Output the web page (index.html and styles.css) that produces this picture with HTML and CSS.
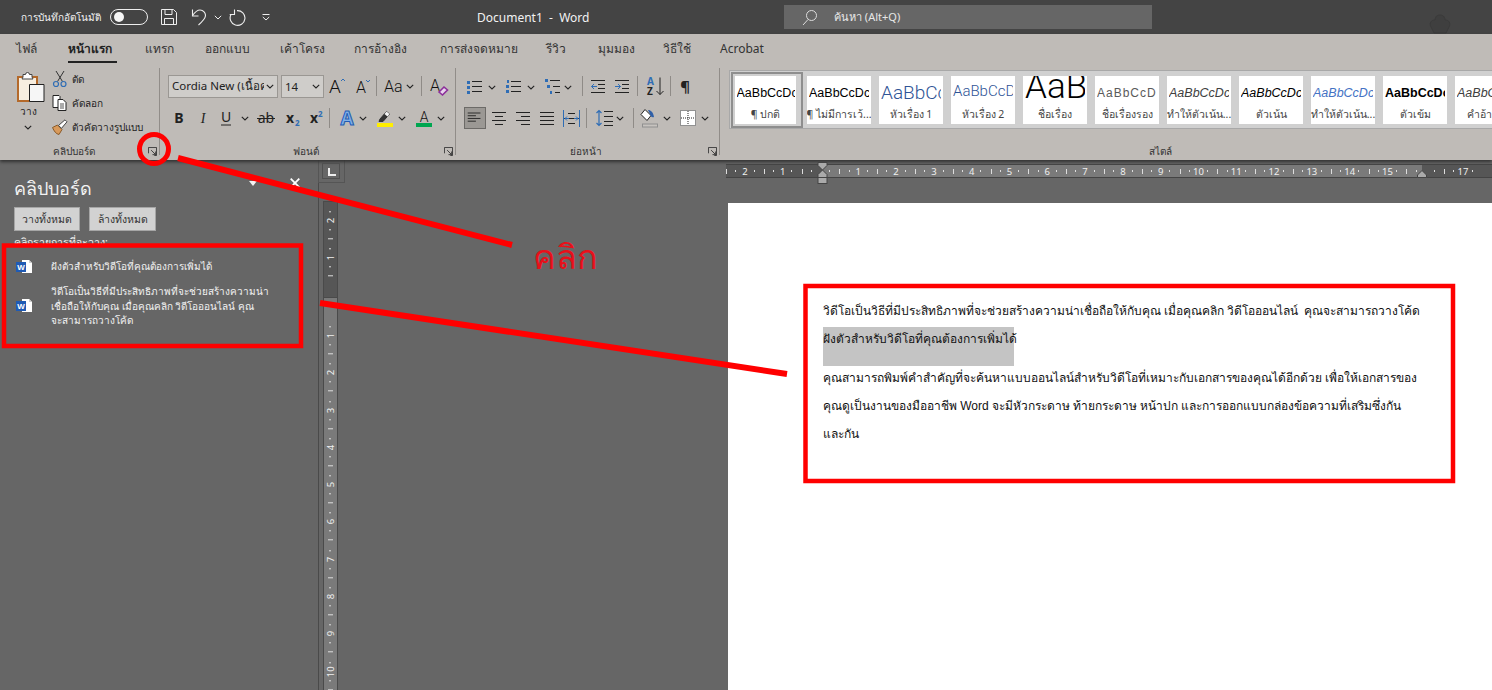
FILE: index.html
```html
<!DOCTYPE html>
<html lang="th">
<head>
    <meta charset="UTF-8">
    <meta name="viewport" content="width=device-width, initial-scale=1.0">
    <title>Document1 - Word</title>
    <link rel="stylesheet" href="styles.css">
</head>
<body>
<svg class="defs" width="0" height="0">
    <symbol id="chev" viewBox="0 0 8 5"><path d="M.8.8 4 4 7.2.8" fill="none" stroke="#222" stroke-width="1.1"/></symbol>
    <symbol id="launch" viewBox="0 0 10 10"><path d="M.5 7V.5h9V9.5H7M3.5 3.5 8.5 8.5M5 8.5h3.5V5" fill="none" stroke="#333" stroke-width="1"/></symbol>
    <symbol id="word" viewBox="0 0 16 15"><path d="M6 1h7l3 3v10H6z" fill="#fff"/><path d="M13 1v3h3" fill="#cfcfcf"/><rect y="3" width="10" height="10" fill="#1f5bb5"/><text x="5" y="11" class="word-w">W</text></symbol>
</svg>

<!-- แถบชื่อเรื่อง -->
<header class="titlebar">
    <span class="autosave">การบันทึกอัตโนมัติ</span>
    <span class="toggle"><i></i></span>
    <svg class="qat save" width="16" height="16" viewBox="0 0 16 16"><path d="M.5.5h12l3 3v12H.5zM4 .5v5h7v-5M3.5 15.5v-6h9v6" fill="none" stroke="#eee"/></svg>
    <svg class="qat undo" width="15" height="17" viewBox="0 0 15 17"><path d="M1.500.5v6.500h6M1.500 6.500C4 3 6 1 9 1c3.500 0 5.500 3 5.500 5.500 0 3-3 6-7 9.500" fill="none" stroke="#eee" stroke-width="1.100"/></svg>
    <svg class="qat chev-w" width="8" height="5"><path d="M.8.8 4 4 7.200.8" fill="none" stroke="#eee"/></svg>
    <svg class="qat redo" width="17" height="17" viewBox="0 0 17 17"><path d="M5.500.5v5H.7M8 1.600A7.400 7.400 0 1 1 2 5.500" fill="none" stroke="#eee" stroke-width="1.100"/></svg>
    <svg class="qat more" width="8" height="7" viewBox="0 0 8 7"><path d="M.5.500h7M.8 3 4 6 7.200 3" fill="none" stroke="#eee"/></svg>
    <span class="doc-title">Document1 &nbsp;-&nbsp; Word</span>
    <div class="search">
        <svg width="16" height="17" viewBox="0 0 16 17"><circle cx="9.500" cy="6.500" r="5" fill="none" stroke="#ddd"/><path d="M6 10.500 1 16" stroke="#ddd"/></svg>
        <span>ค้นหา (Alt+Q)</span>
    </div>
    <svg class="crown" width="30" height="24" viewBox="0 0 30 24"><path d="M15 2c4 0 5 3 5 5 4 0 6 3 4 7l-3 6H9l-3-6C4 10 6 7 10 7c0-2 1-5 5-5z" fill="#3f3f3f" stroke="#3a3a3a"/></svg>
</header>

<!-- ริบบอน -->
<section class="ribbon">
    <nav class="tabs">
        <span class="tab t-file">ไฟล์</span>
        <span class="tab t-home active">หน้าแรก</span>
        <span class="tab t-insert">แทรก</span>
        <span class="tab t-design">ออกแบบ</span>
        <span class="tab t-layout">เค้าโครง</span>
        <span class="tab t-ref">การอ้างอิง</span>
        <span class="tab t-mail">การส่งจดหมาย</span>
        <span class="tab t-review">รีวิว</span>
        <span class="tab t-view">มุมมอง</span>
        <span class="tab t-help">วิธีใช้</span>
        <span class="tab">Acrobat</span>
    </nav>
    <div class="groups">
        <div class="group g-clip">
            <div class="group-body clip-body">
                <div class="paste">
                    <svg class="paste-icon" width="30" height="32" viewBox="0 0 30 32"><path d="M1 5h19v24H1z" fill="#f7eee0" stroke="#b4692a" stroke-width="2"/><path d="M6 5V2.500h2.500a2 2 0 0 1 4 0H15V5l1 2H5z" fill="#fff" stroke="#444"/><path d="M12.500 12.500h14.500v17H12.500z" fill="#f6f6f6" stroke="#222"/></svg>
                    <span>วาง</span>
                    <svg width="8" height="5"><use href="#chev"/></svg>
                </div>
                <div class="clip-list">
                    <div class="clip-row">
                        <svg width="16" height="18" viewBox="0 0 16 18"><path d="M4 1l6.500 10.500M12 1 5.500 11.500" stroke="#333" fill="none"/><circle cx="4" cy="14" r="2.500" fill="none" stroke="#2f6db5" stroke-width="1.200"/><circle cx="11.500" cy="14" r="2.500" fill="none" stroke="#2f6db5" stroke-width="1.200"/></svg>
                        <span>ตัด</span>
                    </div>
                    <div class="clip-row">
                        <svg width="16" height="16" viewBox="0 0 16 16"><path d="M1 .5h6l1 1v11H1z" fill="#fff" stroke="#222"/><path d="M6 4.500h5l3 3v8H6z" fill="#fff" stroke="#222"/><path d="M8 9h4M8 11h4M8 13h4" stroke="#555"/></svg>
                        <span>คัดลอก</span>
                    </div>
                    <div class="clip-row">
                        <svg width="16" height="16" viewBox="0 0 16 16"><path d="M.5 8.500l5-2.500 4.500 4.500-3 5C4 15 2 12 .5 8.500z" fill="#d99a5b" stroke="#8a5a28"/><path d="M6.500 6.500 13 .8l2 2-5.500 6.500z" fill="#fff" stroke="#444"/></svg>
                        <span>ตัวคัดวางรูปแบบ</span>
                    </div>
                </div>
            </div>
            <div class="group-foot"><span>คลิปบอร์ด</span><svg width="9" height="9"><use href="#launch"/></svg></div>
        </div>

        <div class="group g-font">
            <div class="group-body">
                <div class="tool-row">
                    <div class="combo c-font"><span class="combo-text">Cordia New (เนื้อคว</span><svg width="8" height="5"><use href="#chev"/></svg></div>
                    <div class="combo c-size"><span class="combo-text">14</span><svg width="8" height="5"><use href="#chev"/></svg></div>
                    <svg width="26" height="22" viewBox="0 0 26 22"><text x="5" y="18" class="ic-text thin big">A</text><path d="M17 6l2-2 2 2" fill="none" stroke="#2f6db5"/></svg>
                    <svg width="24" height="22" viewBox="0 0 24 22"><text x="6" y="18" class="ic-text thin mid">A</text><path d="M16 5l2 2 2-2" fill="none" stroke="#2f6db5"/></svg>
                    <i class="sep"></i>
                    <svg width="40" height="22" viewBox="0 0 40 22"><text x="5" y="17" class="ic-text thin mid">Aa</text><use href="#chev" x="27" y="9" width="8" height="5"/></svg>
                    <i class="sep"></i>
                    <svg width="26" height="22" viewBox="0 0 26 22"><text x="6" y="16" class="ic-text thin mid">A</text><path d="M15 17l5-5 3.500 3-5 5z" fill="#e9d4ee" stroke="#8c2f9a" stroke-width="1.600"/></svg>
                </div>
                <div class="tool-row second">
                    <svg width="23" height="22" viewBox="0 0 23 22"><text x="11" y="16" class="ic-text bold center">B</text></svg>
                    <svg width="24" height="22" viewBox="0 0 24 22"><text x="12" y="16" class="ic-text ital center">I</text></svg>
                    <svg width="21" height="22" viewBox="0 0 21 22"><text x="11" y="15" class="ic-text center">U</text><path d="M6 18h10" stroke="#222"/></svg>
                    <svg width="17" height="22" viewBox="0 0 17 22"><use href="#chev" x="5" y="9" width="8" height="5"/></svg>
                    <svg width="26" height="22" viewBox="0 0 26 22"><text x="13" y="16" class="ic-text center">ab</text><path d="M4 11.500h18" stroke="#222"/></svg>
                    <svg width="25" height="22" viewBox="0 0 25 22"><text x="11" y="16" class="ic-text bold center">x</text><text x="16" y="19" class="ic-sub">2</text></svg>
                    <svg width="23" height="22" viewBox="0 0 23 22"><text x="10" y="16" class="ic-text bold center">x</text><text x="14" y="10" class="ic-sub">2</text></svg>
                    <i class="sep"></i>
                    <svg width="40" height="22" viewBox="0 0 40 22"><text x="15" y="18" class="ic-glow center">A</text><use href="#chev" x="27" y="9" width="8" height="5"/></svg>
                    <svg width="40" height="22" viewBox="0 0 40 22"><path d="M8 12l6.500-7.500 3 2.500-6.500 7.500H7z" fill="#333" stroke="#333"/><path d="M12.500 7l2-2.500 3 2.500-2 2.500z" fill="#f4f4f4"/><rect x="5" y="16" width="16" height="4" fill="#ffee00"/><use href="#chev" x="26" y="9" width="8" height="5"/></svg>
                    <svg width="39" height="22" viewBox="0 0 39 22"><text x="12" y="15" class="ic-text thin center">A</text><rect x="4" y="16" width="16" height="4" fill="#00a650"/><use href="#chev" x="25" y="9" width="8" height="5"/></svg>
                </div>
            </div>
            <div class="group-foot"><span>ฟอนต์</span><svg width="9" height="9"><use href="#launch"/></svg></div>
        </div>

        <div class="group g-para">
            <div class="group-body">
                <div class="tool-row para-row">
                    <svg width="36" height="22" viewBox="0 0 36 22"><path d="M3 6h3v3H3zM3 11h3v3H3zM3 16h3v3H3z" fill="#2f6db5"/><path d="M8 6.500h10M8 11.500h10M8 16.500h10" stroke="#222"/><use href="#chev" x="24" y="10" width="8" height="5"/></svg>
                    <svg width="38" height="22" viewBox="0 0 38 22"><path d="M7 5h2v3H7zM6 10h3v3H6zM6 15h3v3H6z" fill="#2f6db5"/><path d="M11 6.500h10M11 11.500h10M11 16.500h10" stroke="#222"/><use href="#chev" x="27" y="10" width="8" height="5"/></svg>
                    <svg width="40" height="22" viewBox="0 0 40 22"><path d="M7 4h3v3H7zM9 10h3v3H9zM12 16h2v3h-2z" fill="#2f6db5"/><path d="M12 5.500h10M15 11.500h7M17 17.500h5" stroke="#222"/><use href="#chev" x="26" y="10" width="8" height="5"/></svg>
                    <i class="sep wide"></i>
                    <svg width="27" height="22" viewBox="0 0 27 22"><path d="M8 5.500h14M15 9.500h7M15 13.500h7M8 17.500h14" stroke="#222"/><path d="M14 11.500H8.500M11 9l-2.500 2.500L11 14" fill="none" stroke="#2f6db5"/></svg>
                    <svg width="25" height="22" viewBox="0 0 25 22"><path d="M5 5.500h14M12 9.500h7M12 13.500h7M5 17.500h14" stroke="#222"/><path d="M5 11.500h5.500M8 9l2.500 2.500L8 14" fill="none" stroke="#2f6db5"/></svg>
                    <i class="sep"></i>
                    <svg width="30" height="22" viewBox="0 0 30 22"><text x="7" y="10" class="ic-sort blue">A</text><text x="7" y="20" class="ic-sort">Z</text><path d="M20 2.500v17M16.500 16l3.500 3.500 3.500-3.500" fill="none" stroke="#222"/></svg>
                    <i class="sep tight"></i>
                    <svg width="30" height="22" viewBox="0 0 30 22"><text x="14" y="17" class="ic-text bold center big-p">¶</text></svg>
                </div>
                <div class="tool-row second para-row">
                    <svg class="pressed" width="22" height="22" viewBox="0 0 22 22"><path d="M3 5.500h14M3 8.500h9M3 11.500h14M3 14.500h9" stroke="#222"/></svg>
                    <svg width="25" height="22" viewBox="0 0 25 22"><path d="M6 5.500h14M9 9.500h8M6 13.500h14M9 17.500h8" stroke="#222"/></svg>
                    <svg width="24" height="22" viewBox="0 0 24 22"><path d="M5 5.500h14M10 9.500h9M5 13.500h14M10 17.500h9" stroke="#222"/></svg>
                    <svg width="24" height="22" viewBox="0 0 24 22"><path d="M5 5.500h14M5 9.500h14M5 13.500h14M5 17.500h14" stroke="#222"/></svg>
                    <svg width="25" height="22" viewBox="0 0 25 22"><path d="M4.500 3v17M20.500 3v17" stroke="#2f6db5"/><path d="M9 6.500h7M5 11.500h15M9 16.500h7" stroke="#222"/><path d="M10 11.500H6M8 9.500l-2 2 2 2M15 11.500h4M17 9.500l2 2-2 2" fill="none" stroke="#2f6db5"/></svg>
                    <i class="sep"></i>
                    <svg width="41" height="22" viewBox="0 0 41 22"><path d="M10 3.500v15M7.500 6 10 3.500 12.500 6M7.500 16l2.500 2.500 2.500-2.500" fill="none" stroke="#2f6db5" stroke-width="1.200"/><path d="M15 4.500h9M15 9.500h9M15 14.500h9M15 18.500h9" stroke="#222"/><use href="#chev" x="27" y="9" width="8" height="5"/></svg>
                    <i class="sep mid"></i>
                    <svg width="42" height="22" viewBox="0 0 42 22"><path d="M11 2.500l6 6-4 5-6-6z" fill="#fff" stroke="#222"/><path d="M14 3c3 0 5 2 6 7-2 1-4-1-4-3z" fill="#2f5fa8"/><rect x="8.500" y="17" width="15" height="3" fill="#c7c3bf" stroke="#8f8f8f"/><use href="#chev" x="29" y="9" width="8" height="5"/></svg>
                    <svg width="36" height="22" viewBox="0 0 36 22"><rect x="4" y="3" width="16" height="16" fill="#fff"/><path d="M4.500 3.500h15v15h-15z" fill="none" stroke="#222" stroke-dasharray="1 1"/><path d="M12 4v14M5 11h14" stroke="#222" stroke-dasharray="1 1"/><use href="#chev" x="25" y="9" width="8" height="5"/></svg>
                </div>
            </div>
            <div class="group-foot"><span>ย่อหน้า</span><svg width="9" height="9"><use href="#launch"/></svg></div>
        </div>

        <div class="group g-styles">
            <div class="group-body gallery-wrap">
                <div class="gallery">
                    <div class="style-card selected"><span class="sample">AaBbCcDc</span><span class="label">¶ ปกติ</span></div>
                    <div class="style-card"><span class="sample">AaBbCcDc</span><span class="label">¶ ไม่มีการเว้...</span></div>
                    <div class="style-card"><span class="sample s-h1">AaBbCc</span><span class="label">หัวเรื่อง 1</span></div>
                    <div class="style-card"><span class="sample s-h2">AaBbCcD</span><span class="label">หัวเรื่อง 2</span></div>
                    <div class="style-card"><span class="sample s-title">AaB</span><span class="label">ชื่อเรื่อง</span></div>
                    <div class="style-card"><span class="sample s-sub">AaBbCcD</span><span class="label">ชื่อเรื่องรอง</span></div>
                    <div class="style-card"><span class="sample s-em">AaBbCcDc</span><span class="label">ทำให้ตัวเน้น...</span></div>
                    <div class="style-card"><span class="sample s-emb">AaBbCcDc</span><span class="label">ตัวเน้น</span></div>
                    <div class="style-card"><span class="sample s-emblue">AaBbCcDc</span><span class="label">ทำให้ตัวเน้น...</span></div>
                    <div class="style-card"><span class="sample s-bold">AaBbCcDc</span><span class="label">ตัวเข้ม</span></div>
                    <div class="style-card"><span class="sample s-em">AaBbCcDc</span><span class="label">คำอ้างอิง</span></div>
                </div>
            </div>
            <div class="group-foot"><span>สไตล์</span></div>
        </div>
    </div>
</section>

<!-- พื้นที่ทำงาน -->
<main class="workspace">
    <aside class="pane">
        <div class="pane-head">
            <h2>คลิปบอร์ด</h2>
            <i class="pane-menu"></i>
            <svg class="pane-close" width="10" height="10" viewBox="0 0 10 10"><path d="M.7.7l8.600 8.600M9.300.7.700 9.300" stroke="#fff" stroke-width="1.800"/></svg>
        </div>
        <div class="pane-btns"><button class="btn">วางทั้งหมด</button><button class="btn">ล้างทั้งหมด</button></div>
        <p class="pane-hint">คลิกรายการที่จะวาง:</p>
        <div class="clip-item one">
            <svg width="16" height="15"><use href="#word"/></svg>
            <p>ฝังตัวสำหรับวิดีโอที่คุณต้องการเพิ่มได้</p>
        </div>
        <div class="clip-item">
            <svg width="16" height="15"><use href="#word"/></svg>
            <p>วิดีโอเป็นวิธีที่มีประสิทธิภาพที่จะช่วยสร้างความน่า<br>เชื่อถือให้กับคุณ เมื่อคุณคลิก วิดีโอออนไลน์ คุณ<br>จะสามารถวางโค้ด</p>
        </div>
    </aside>

    <div class="vruler-col">
        <div class="tab-stop"><i></i></div>
        <div class="vruler">
            <div class="vr-top"><span class="n">2</span><span class="n">1</span></div>
            <div class="vr-main"><span class="n">1</span><span class="n">2</span><span class="n">3</span><span class="n">4</span><span class="n">5</span><span class="n">6</span><span class="n">7</span><span class="n">8</span><span class="n">9</span><span class="n">10</span></div>
        </div>
    </div>

    <div class="canvas">
        <div class="hruler">
            <span class="n">2</span><span class="n">1</span><span class="n"></span><span class="n">1</span><span class="n">2</span><span class="n">3</span><span class="n">4</span><span class="n">5</span><span class="n">6</span><span class="n">7</span><span class="n">8</span><span class="n">9</span><span class="n">10</span><span class="n">11</span><span class="n">12</span><span class="n">13</span><span class="n">14</span><span class="n">15</span><span class="n"></span><span class="n">17</span>
            <svg class="indent-left" width="11" height="22" viewBox="0 0 11 22"><path d="M1 .5h9v3L5.500 8 10 12.500v3H1v-3L5.500 8 1 3.500z" fill="#aaa" stroke="#444"/><rect x="1" y="15.500" width="9" height="6" fill="#aaa" stroke="#444"/></svg>
            <svg class="indent-right" width="10" height="8" viewBox="0 0 10 8"><path d="M5 .5 9.500 5v2.500H.5V5z" fill="#aaa" stroke="#444"/></svg>
        </div>
        <article class="page">
            <p class="line">วิดีโอเป็นวิธีที่มีประสิทธิภาพที่จะช่วยสร้างความน่าเชื่อถือให้กับคุณ เมื่อคุณคลิก วิดีโอออนไลน์ &nbsp;คุณจะสามารถวางโค้ด</p>
            <p class="line picked">ฝังตัวสำหรับวิดีโอที่คุณต้องการเพิ่มได้</p>
            <p class="line">คุณสามารถพิมพ์คำสำคัญที่จะค้นหาแบบออนไลน์สำหรับวิดีโอที่เหมาะกับเอกสารของคุณได้อีกด้วย เพื่อให้เอกสารของ</p>
            <p class="line">คุณดูเป็นงานของมืออาชีพ <span class="latin">Word</span> จะมีหัวกระดาษ ท้ายกระดาษ หน้าปก และการออกแบบกล่องข้อความที่เสริมซึ่งกัน</p>
            <p class="line">และกัน</p>
        </article>
    </div>
</main>

<!-- เส้นกำกับสีแดง -->
<svg class="marks" width="1492" height="690" viewBox="0 0 1492 690">
    <g fill="none" stroke="#f00">
        <circle cx="154" cy="149" r="14.500" stroke-width="5"/>
        <path d="M178 158 512 245" stroke-width="6"/>
        <path d="M320 303 787 374" stroke-width="6"/>
        <rect x="4" y="245.500" width="297" height="100.500" stroke-width="4.500"/>
        <rect x="805.500" y="286" width="647.500" height="195" stroke-width="4.500"/>
    </g>
</svg>
<span class="click-note">คลิก</span>
</body>
</html>
```

FILE: styles.css
```css
*{padding:0;margin:0;box-sizing:border-box;}
html,body{width:1492px;height:690px;overflow:hidden;}
body{font-family:"Noto Sans","Liberation Sans",sans-serif;font-size:12px;color:#222;background:#666;position:relative;}
svg{display:block;flex:none;}
.defs{position:absolute;}
.word-w{font:bold 8px "Liberation Sans",sans-serif;fill:#fff;text-anchor:middle;}

/* แถบชื่อเรื่อง */
.titlebar{height:34px;background:#444;color:#f2f2f2;display:flex;align-items:center;padding-left:21px;overflow:hidden;}
.autosave{width:89px;white-space:nowrap;font-size:10px;}
.toggle{width:38px;height:16px;border:1px solid #eee;border-radius:8px;display:flex;align-items:center;padding-left:3px;}
.toggle i{width:10px;height:10px;border-radius:50%;background:#f5f5f5;}
.qat{margin-left:13px;}
.undo{margin-left:14px;}
.chev-w{margin-left:8px;}
.redo{margin-left:7px;}
.more{margin-left:16px;}
.doc-title{margin-left:207px;width:307px;font-size:12px;white-space:nowrap;}
.search{width:368px;height:24px;background:#666;display:flex;align-items:center;gap:16px;padding-left:18px;font-size:11px;color:#e6e6e6;}
.crown{margin-left:273px;margin-top:16px;}

/* ริบบอน */
.ribbon{height:126px;background:#bfbbb7;overflow:hidden;box-shadow:0 2px 3px #333;position:relative;}
.tabs{height:34px;display:flex;padding-left:16px;font-size:12px;color:#333;}
.tab{height:28px;margin-top:1px;line-height:28px;white-space:nowrap;border-bottom:2px solid transparent;flex:none;}
.tab.active{font-weight:700;color:#222;border-bottom-color:#222;}
.t-file{width:52px;}
.t-home{width:49px;margin-right:28px;}
.t-insert{width:60px;}
.t-design{width:75px;}
.t-layout{width:74px;}
.t-ref{width:86px;}
.t-mail{width:106px;}
.t-review{width:52px;}
.t-view{width:65px;}
.t-help{width:57px;}
.groups{display:flex;height:92px;width:1600px;}
.group{display:flex;flex-direction:column;flex:none;background:linear-gradient(#918d89,#918d89) right top/1px 87px no-repeat;}
.group-body{height:76px;}
.group-foot{height:15px;display:flex;align-items:center;font-size:10px;color:#333;padding-right:3px;}
.group-foot span{flex:1;text-align:center;}
.g-clip{width:160px;}
.g-font{width:296px;padding-left:8px;}
.g-para{width:264px;padding-left:8px;}
.g-styles{width:884px;background:none;}
.clip-body{display:flex;}
.paste{width:56px;padding-top:4px;display:flex;flex-direction:column;align-items:center;font-size:10px;}
.paste-icon{margin-left:7px;}
.paste span{line-height:14px;margin:0 0 7px;}
.clip-list{margin:-1px 0 0 -4px;}
.clip-row{height:24px;display:flex;align-items:center;gap:4px;font-size:10px;white-space:nowrap;}
.tool-row{display:flex;align-items:center;height:24px;margin-top:6px;}
.tool-row.second{margin-top:8px;}
.combo{height:23px;background:#cfcdca;border:1px solid #9a9793;display:flex;align-items:center;justify-content:space-between;padding:0 3px;margin-right:3px;overflow:hidden;}
.combo-text{font-size:11.500px;white-space:nowrap;overflow:hidden;}
.c-font{width:110px;}
.c-font .combo-text{width:92px;}
.c-size{width:43px;margin-right:0;}
.sep{width:1px;height:20px;background:#8f8b87;margin:0 2px;flex:none;}
.sep.wide{margin:0 0 0 4px;}
.sep.tight{margin:0;}
.sep.mid{margin:0 0 0 3px;}
.pressed{background:#9b9894;border:1px solid #6c6a67;}
.ic-text{font-family:"Noto Sans",sans-serif;font-size:14px;fill:#222;}
.ic-text.thin{font-family:Roboto,sans-serif;font-weight:300;fill:#111;}
.ic-text.big{font-size:19px;}
.ic-text.mid{font-size:16px;}
.ic-text.big-p{font-size:15px;}
.bold{font-weight:700;}
.ital{font-style:italic;font-family:"Liberation Serif",serif;}
.center{text-anchor:middle;}
.ic-sub{font:bold 8px "Noto Sans",sans-serif;fill:#2f6db5;}
.ic-glow{font:bold 19px "Noto Sans",sans-serif;fill:#7fb0e8;stroke:#1f5bb5;text-anchor:middle;}
.ic-sort{font:bold 10px "Noto Sans",sans-serif;fill:#222;}
.ic-sort.blue{fill:#2f6db5;}

/* แกลเลอรีสไตล์ */
.gallery-wrap{padding:2px 0 0 9px;}
.gallery{height:59px;background:#d0d0d0;border:1px solid #a8a8a8;display:flex;align-items:center;gap:8px;padding-left:5px;}
.style-card{width:64px;height:48px;background:#fff;flex:none;display:flex;flex-direction:column;align-items:center;overflow:hidden;}
.style-card.selected{border-right:3px solid #d0d0d0;box-shadow:0 0 0 2px #d0d0d0,0 0 0 4px #8e8e8e;overflow:visible;}
.sample{height:29px;width:60px;overflow:hidden;white-space:nowrap;font:12.500px/34px "Liberation Sans",sans-serif;color:#000;flex:none;}
.label{font-size:10.500px;line-height:19px;color:#444;white-space:nowrap;}
.selected .sample{width:58px;}
.s-h1{font-family:Roboto,sans-serif;font-weight:300;font-size:19px;line-height:33px;color:#2f5496;}
.s-h2{font-family:Roboto,sans-serif;font-weight:300;font-size:15px;line-height:31px;color:#2f5496;}
.s-title{font-family:Roboto,sans-serif;font-weight:300;font-size:35px;line-height:22px;}
.s-sub{font-size:12px;letter-spacing:1px;color:#5a5a5a;}
.s-em{font-style:italic;color:#404040;}
.s-emb{font-style:italic;color:#000;}
.s-emblue{font-style:italic;color:#4472c4;}
.s-bold{font-weight:700;}

/* พื้นที่ทำงาน */
.workspace{display:flex;height:530px;background:#666;}
.pane{width:318px;color:#f2f2f2;padding:0 14px;flex:none;overflow:hidden;}
.pane-head{height:47px;display:flex;align-items:flex-start;}
.pane-head h2{font-size:18px;font-weight:400;line-height:24px;margin-top:16px;width:234px;}
.pane-menu{width:0;height:0;margin:21px 0 0 1px;border:4px solid transparent;border-top:5px solid #f2f2f2;border-bottom:0;}
.pane-close{margin:18px 0 0 33px;}
.pane-btns{display:flex;gap:9px;}
.btn{height:24px;width:66px;background:#d2d2d2;border:1px solid #a6a6a6;font:10.500px "Noto Sans",sans-serif;color:#333;}
.btn + .btn{width:67px;}
.pane-hint{font-size:10.500px;line-height:14px;margin-top:4px;height:13px;overflow:hidden;}
.clip-item{display:flex;align-items:center;gap:19px;padding-left:2px;font-size:10px;line-height:14.500px;white-space:nowrap;margin-top:10px;}
.clip-item.one{margin-top:11px;}

.vruler-col{width:408px;flex:none;border-left:1px solid #4a4a4a;}
.tab-stop{width:27px;height:23px;border:1px solid #555;border-top:0;margin-left:-1px;padding:3px;background:#666;}
.tab-stop i{display:block;height:16px;width:18px;border:1px solid #505050;position:relative;}
.tab-stop i::before{content:"";position:absolute;left:5px;top:4px;width:6px;height:6px;border-left:2px solid #eee;border-bottom:2px solid #eee;}
.vruler{margin:18px 0 0 4px;width:15px;}
.vr-top{height:97px;background:#565656;border:1px solid #4a4a4a;display:flex;flex-direction:column;overflow:hidden;}
.vr-main{height:420px;padding-top:19px;background:#7a7a7a;border:1px solid #4a4a4a;border-top:0;display:flex;flex-direction:column;overflow:hidden;}
.vruler .n{height:37.300px;flex:none;display:flex;align-items:center;justify-content:center;color:#f0f0f0;font-size:9.500px;writing-mode:vertical-rl;transform:rotate(180deg);
    background-image:linear-gradient(#ddd,#ddd),linear-gradient(#ddd,#ddd),linear-gradient(#ddd,#ddd);
    background-size:5px 1px,2px 1px,2px 1px;background-repeat:no-repeat;background-position:center 0,center 25%,center 75%;}

.canvas{flex:1;overflow:hidden;}
.hruler{width:766px;height:14px;margin-top:4px;display:flex;position:relative;
    background:linear-gradient(to right,#565656 96px,#7a7a7a 96px,#7a7a7a 696px,#565656 696px);border-top:1px solid #444;border-bottom:1px solid #444;}
.hruler .n{width:37.800px;flex:none;text-align:center;line-height:13px;font-size:9.500px;color:#f0f0f0;
    background-image:linear-gradient(#ddd,#ddd),linear-gradient(#ddd,#ddd),linear-gradient(#ddd,#ddd);
    background-size:1px 5px,1px 2px,1px 2px;background-repeat:no-repeat;background-position:0 center,25% center,75% center;}
.indent-left{position:absolute;left:91px;top:-3px;}
.indent-right{position:absolute;left:691px;top:5px;}
.page{margin:25px 0 0 2px;height:500px;background:#fff;padding:94px 0 0 95px;color:#111;}
.line{height:28px;line-height:28px;font-size:12px;white-space:nowrap;}
.line.picked{height:39px;width:191px;background:#c4c4c4;line-height:24px;margin:2px 0 -2px;}
.latin{font-family:"Liberation Sans",sans-serif;}

/* เส้นกำกับสีแดง */
.marks{position:absolute;left:0;top:0;pointer-events:none;}
.click-note{position:absolute;left:533px;top:232px;font-size:34px;line-height:48px;color:#e8101a;}
```
